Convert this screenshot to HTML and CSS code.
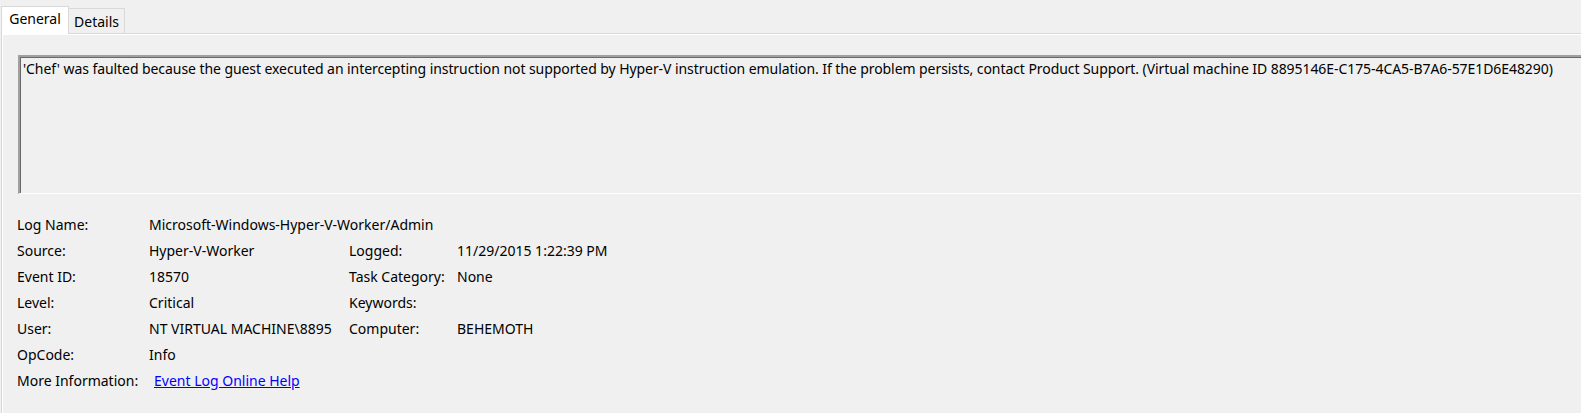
FILE: index.html
```html
<!DOCTYPE html>
<html>
<head>
<meta charset="utf-8">
<link rel="stylesheet" href="styles.css">
</head>
<body>
<div class="tabs">
  <div class="tab tab-active">General</div>
  <div class="tab">Details</div>
</div>
<div class="pane">
  <div class="message">'Chef' was faulted because the guest executed an intercepting instruction not supported by Hyper-V instruction emulation. If the problem persists, contact Product Support. (Virtual machine ID 8895146E-C175-4CA5-B7A6-57E1D6E48290)</div>
  <div class="fields">
    <div class="label">Log Name:</div>
    <div class="value span3">Microsoft-Windows-Hyper-V-Worker/Admin</div>

    <div class="label">Source:</div>
    <div class="value">Hyper-V-Worker</div>
    <div class="label">Logged:</div>
    <div class="value">11/29/2015 1:22:39 PM</div>

    <div class="label">Event ID:</div>
    <div class="value">18570</div>
    <div class="label">Task Category:</div>
    <div class="value">None</div>

    <div class="label">Level:</div>
    <div class="value">Critical</div>
    <div class="label">Keywords:</div>
    <div class="value"></div>

    <div class="label">User:</div>
    <div class="value">NT VIRTUAL MACHINE\8895</div>
    <div class="label">Computer:</div>
    <div class="value">BEHEMOTH</div>

    <div class="label">OpCode:</div>
    <div class="value span3">Info</div>

    <div class="label">More Information:</div>
    <div class="value span3"><a class="link" href="#">Event Log Online Help</a></div>
  </div>
</div>
</body>
</html>
```

FILE: styles.css
```css
html, body {
  margin: 0;
  padding: 0;
  background: #f0f0f0;
  overflow: hidden;
}
body {
  width: 1581px;
  height: 413px;
  font-family: "Noto Sans", "Open Sans", sans-serif;
  font-size: 14px;
  color: #000;
}
.tabs {
  display: flex;
  align-items: flex-end;
  padding-left: 1px;
  padding-top: 6px;
  height: 27px;
  position: relative;
  z-index: 1;
}
.tab {
  box-sizing: border-box;
  height: 25px;
  width: 56px;
  border: 1px solid #d9d9d9;
  border-bottom: none;
  border-left: none;
  background: #f0f0f0;
  display: flex;
  align-items: center;
  justify-content: center;
  padding-top: 2px;
  line-height: 1;
}
.tab-active {
  height: 28px;
  width: 68px;
  border-left: 1px solid #d9d9d9;
  background: #fff;
  margin-bottom: -1px;
  padding-top: 0;
  padding-bottom: 3px;
}
.pane {
  box-sizing: border-box;
  height: 380px;
  margin-left: 1px;
  border-top: 1px solid #d9d9d9;
  border-left: 1px solid #d9d9d9;
  box-shadow: inset 1px 1px 0 #fff;
  padding-top: 21px;
  padding-left: 16px;
}
.message {
  box-sizing: border-box;
  width: 1600px;
  height: 139px;
  border-top: 2px solid #a0a0a0;
  border-left: 2px solid #a0a0a0;
  border-bottom: 1px solid #fff;
  box-shadow: inset 1px 1px 0 #696969;
  padding: 3px 0 0 3px;
  white-space: nowrap;
  line-height: 18px;
  letter-spacing: -0.07px;
}
.fields {
  display: grid;
  grid-template-columns: 132px 200px 108px 1fr;
  grid-auto-rows: 26px;
  margin-top: 18px;
  margin-left: -1px;
  line-height: 26px;
}
.label, .value {
  white-space: nowrap;
}
.span3 {
  grid-column: 2 / 5;
}
.link {
  margin-left: 5px;
  color: #0000ff;
  text-decoration: underline;
}
```
